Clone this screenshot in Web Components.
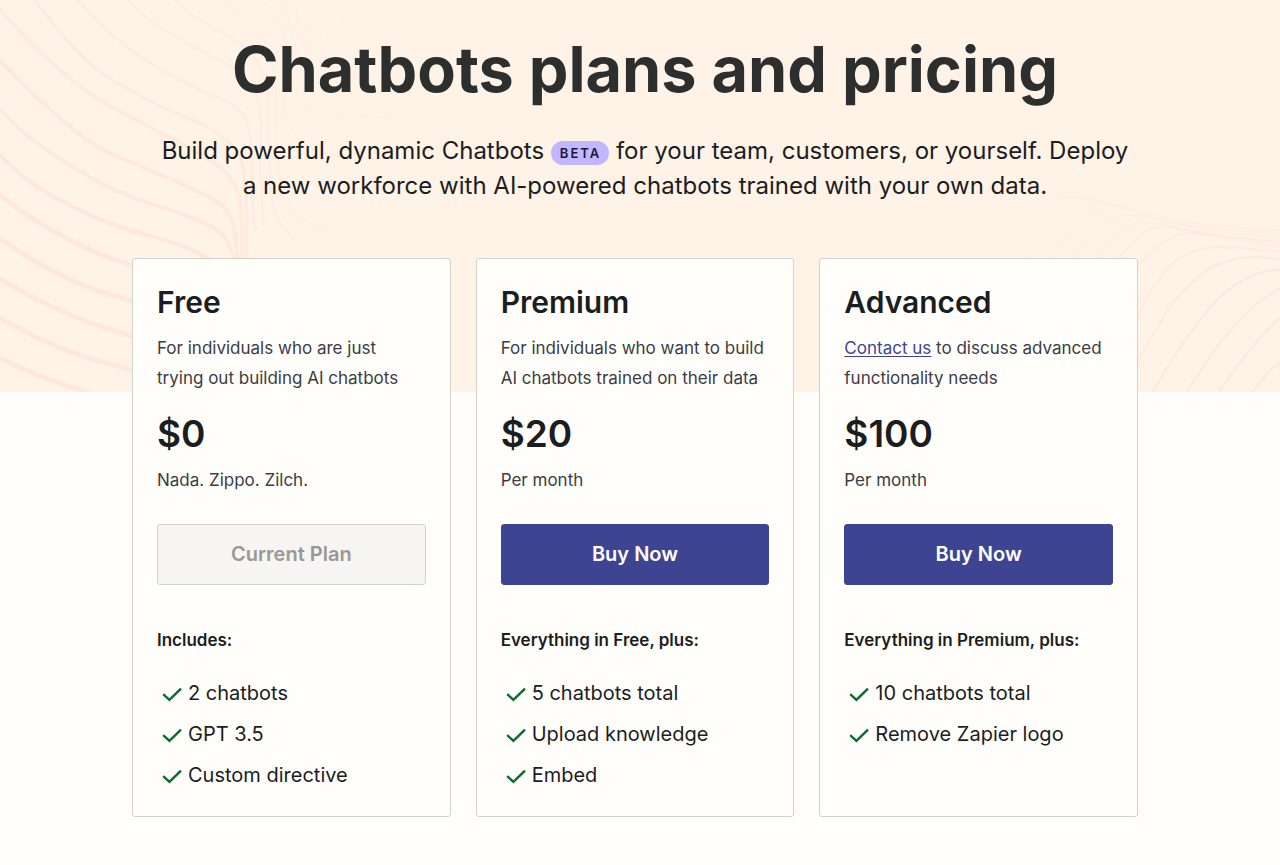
<!DOCTYPE html>
<html lang="en">
<head>
<meta charset="utf-8">
<meta name="viewport" content="width=device-width, initial-scale=1">
<title>Chatbots plans and pricing</title>
<style>
  body { margin: 0; background: #fffefb; color: #1b1d1e; font-family: Inter, "Liberation Sans", sans-serif; }
  plan-card a { color: #3d4592; text-underline-offset: 2px; }
</style>
</head>
<body>
<pricing-page>
  <pricing-header slot="header">
    <span slot="title">Chatbots plans and pricing</span>
    Build powerful, dynamic Chatbots <beta-badge>BETA</beta-badge> for your team, customers, or yourself. Deploy a new workforce with AI-powered chatbots trained with your own data.
  </pricing-header>
  <plan-card action="Current Plan" current>
    <span slot="name">Free</span>
    <span slot="description">For individuals who are just trying out building AI chatbots</span>
    <span slot="price">$0</span>
    <span slot="period">Nada. Zippo. Zilch.</span>
    <span slot="includes">Includes:</span>
    <plan-feature>2 chatbots</plan-feature>
    <plan-feature>GPT 3.5</plan-feature>
    <plan-feature>Custom directive</plan-feature>
  </plan-card>
  <plan-card action="Buy Now">
    <span slot="name">Premium</span>
    <span slot="description">For individuals who want to build AI chatbots trained on their data</span>
    <span slot="price">$20</span>
    <span slot="period">Per month</span>
    <span slot="includes">Everything in Free, plus:</span>
    <plan-feature>5 chatbots total</plan-feature>
    <plan-feature>Upload knowledge</plan-feature>
    <plan-feature>Embed</plan-feature>
  </plan-card>
  <plan-card action="Buy Now">
    <span slot="name">Advanced</span>
    <span slot="description"><a href="#contact">Contact us</a> to discuss advanced functionality needs</span>
    <span slot="price">$100</span>
    <span slot="period">Per month</span>
    <span slot="includes">Everything in Premium, plus:</span>
    <plan-feature>10 chatbots total</plan-feature>
    <plan-feature>Remove Zapier logo</plan-feature>
  </plan-card>
</pricing-page>

<script>
function define(name, html, setup) {
  const template = document.createElement('template');
  template.innerHTML = html;
  customElements.define(name, class extends HTMLElement {
    constructor() {
      super();
      this.attachShadow({ mode: 'open' }).append(template.content.cloneNode(true));
    }
    connectedCallback() { if (setup) setup(this, this.shadowRoot); }
  });
}

// Contour lines: [stroke width, opacity, points...]; each is smoothed into a curve.
const leftLines = [
  [5, .9, [-10,352],[0,358],[40,376],[85,392],[110,402]],
  [5, .9, [-10,312],[0,318],[40,339],[85,357],[132,370],[170,380]],
  [5, .9, [-10,273],[0,279],[40,301],[85,321],[132,336],[170,348]],
  [5, .9, [-10,233],[0,239],[40,264],[85,286],[132,301],[170,312]],
  [5, .9, [-10,186],[0,195],[30,217],[70,240],[110,258],[150,270]],
  [4, .9, [-10,146],[0,155],[30,182],[75,208],[120,227],[180,245],[215,262]],
  [4, .8, [-10,100],[0,109],[33,140],[95,180],[140,200],[190,217],[222,234],[236,262]],
  [4, .8, [-10,48],[0,60],[45,105],[95,145],[145,168],[205,195],[231,218],[238,262]],
  [4, .7, [-10,-6],[0,9],[40,52],[95,97],[150,127],[205,157],[232,180],[241,210],[242,262]],
  [3, .7, [28,-8],[60,32],[95,68],[150,101],[205,126],[234,148],[245,180],[247,262]],
  [3, .6, [70,-8],[110,33],[150,63],[205,92],[237,108],[250,135],[252,200],[255,230]],
  [2, .6, [119,-8],[155,24],[200,50],[236,70],[256,94],[261,125],[260,170],[264,226]],
  [2, .6, [165,-8],[200,20],[238,42],[259,65],[268,95],[269,150],[274,210],[294,240]],
  [1, .6, [208,-8],[240,14],[263,38],[275,80],[277,140],[281,190],[298,216],[330,232]],
  [1, .6, [252,-8],[272,12],[285,40],[284,90],[287,120],[308,146],[350,160]],
  [1, .5, [276,-8],[288,18],[296,50],[294,85],[304,104],[340,114],[400,119]],
  [1, .5, [295,-8],[298,20],[306,60],[303,95]],
  [1, .4, [309,-8],[307,30],[312,60]],
  [1, .4, [322,-8],[319,15],[322,42]],
  [1, .4, [336,-8],[331,15],[330,34]],
  [1, .3, [351,-8],[345,15],[340,30]]
];
// The right group counts x from the left edge of a 260-wide drawing.
const rightLines = [
  [2, .9, [227,398],[233,391],[247,374],[262,360]],
  [2, .9, [195,398],[200,391],[227,353],[262,315]],
  [2, .9, [163,398],[167,391],[200,343],[233,307],[262,287]],
  [2, .9, [129,398],[133,391],[163,343],[200,297],[233,275],[262,269]],
  [2, .8, [112,370],[120,357],[153,303],[187,270],[215,259],[240,257],[262,260]],
  [2, .7, [114,325],[120,313],[133,287],[157,260],[187,248],[220,248],[262,252]],
  [2, .6, [118,264],[147,240],[170,233],[207,238],[262,248]],
  [2, .5, [99,258],[123,233],[143,227],[180,232],[262,244]],
  [1, .7, [76,258],[98,234],[118,223],[150,226],[190,236],[262,241]],
  [1, .6, [54,258],[76,232],[98,217],[130,217],[190,231],[262,237]],
  [1, .5, [32,258],[54,226],[78,211],[107,210],[160,225],[262,234]],
  [1, .4, [8,258],[32,220],[55,204],[85,204],[130,214],[180,227],[262,232]],
  [1, .7, [35,198],[63,198],[107,208],[160,221],[215,227],[262,230]],
  [1, .2, [150,200],[200,170],[262,145]],
  [1, .2, [170,218],[210,205],[262,182]]
];
function drawLines(svg, lines) {
  for (const [width, opacity, ...p] of lines) {
    let d = `M${p[0]}`;
    for (let i = 0; i < p.length - 1; i++) {
      const a = p[i - 1] || p[i], b = p[i], c = p[i + 1], e = p[i + 2] || c;
      d += `C${b[0] + (c[0] - a[0]) / 6},${b[1] + (c[1] - a[1]) / 6} ${c[0] - (e[0] - b[0]) / 6},${c[1] - (e[1] - b[1]) / 6} ${c}`;
    }
    const path = document.createElementNS('http://www.w3.org/2000/svg', 'path');
    path.setAttribute('d', d);
    path.setAttribute('stroke-width', width);
    path.setAttribute('opacity', opacity);
    svg.append(path);
  }
}

define('contour-backdrop', `
  <style>
    :host { display: flex; justify-content: space-between; height: 392px; overflow: hidden; background: #fff3e8; }
    svg { flex: none; height: 392px; fill: none; stroke: #ffe6d9; }
  </style>
  <svg class="left" width="420" viewBox="0 0 420 392" aria-hidden="true"></svg>
  <svg class="right" width="260" viewBox="0 0 260 392" aria-hidden="true"></svg>
`, (el, root) => {
  const left = root.querySelector('.left');
  if (left.childElementCount) return;
  drawLines(left, leftLines);
  drawLines(root.querySelector('.right'), rightLines);
});

define('pricing-page', `
  <style>
    :host { display: block; position: relative; }
    contour-backdrop { position: absolute; inset: 0 0 auto; }
    main { position: relative; padding: 35px 0 48px; }
    .header { padding: 0 16px 0 26px; }
    .plans { padding: 55px 26px 0 16px; }
    .grid { display: grid; grid-template-columns: repeat(auto-fit, minmax(280px, 1fr)); gap: 25px; max-width: 1006px; margin: 0 auto; }
  </style>
  <contour-backdrop></contour-backdrop>
  <main>
    <div class="header"><slot name="header"></slot></div>
    <div class="plans"><div class="grid"><slot></slot></div></div>
  </main>
`);

define('pricing-header', `
  <style>
    :host { display: block; text-align: center; }
    h1 { margin: 0; font-size: 63px; line-height: 68px; font-weight: 700; color: #2d2e2e; }
    p { max-width: 980px; margin: 30px auto 0; font-size: 24px; line-height: 35px; }
  </style>
  <h1><slot name="title"></slot></h1>
  <p><slot></slot></p>
`);

define('beta-badge', `
  <style>
    :host { display: inline-block; padding: 0 8px 0 9px; border-radius: 12px; background: #c1b7ff; color: #1f1440;
      font-size: 13px; line-height: 24px; font-weight: 600; letter-spacing: 2px; vertical-align: 1px; }
  </style>
  <slot></slot>
`);

define('plan-card', `
  <style>
    :host { display: block; box-sizing: border-box; padding: 24px 24px 20px; border: 1px solid #d3d1cd; border-radius: 3px; background: #fffefb; }
    h2 { margin: 0; font-size: 30px; line-height: 38px; font-weight: 600; }
    p { margin: 0; }
    .small { font-size: 17px; line-height: 30px; font-weight: 400; color: #3c3c44; }
    .description { margin-top: 12px; }
    .price { margin-top: 16px; font-size: 37px; line-height: 50px; font-weight: 600; }
    .period { margin-top: 6px; }
    button { display: block; width: 100%; height: 61px; margin-top: 29px; padding: 0 0 2px; border: 1px solid #3d4592; border-radius: 3px;
      background: #3d4592; color: #fffdf9; font: 600 20px/24px Inter, "Liberation Sans", sans-serif; cursor: pointer; }
    button:disabled { border-color: #d3d1cd; background: #f6f5f3; color: #9b9894; cursor: default; }
    h3 { margin: 43px 0 0; font-size: 17px; line-height: 24px; font-weight: 600; }
    .features { margin-top: 21px; }
    ::slotted(span) { display: block; }
  </style>
  <h2><slot name="name"></slot></h2>
  <p class="small description"><slot name="description"></slot></p>
  <p class="price"><slot name="price"></slot></p>
  <p class="small period"><slot name="period"></slot></p>
  <button type="button"></button>
  <h3><slot name="includes"></slot></h3>
  <div class="features" role="list"><slot></slot></div>
`, (el, root) => {
  const button = root.querySelector('button');
  button.textContent = el.getAttribute('action');
  button.disabled = el.hasAttribute('current');
});

define('plan-feature', `
  <style>
    :host { display: flex; align-items: center; font-size: 20px; line-height: 41px; }
    svg { flex: none; width: 31px; height: 24px; fill: none; stroke: #0a6b2f; stroke-width: 2.4; }
  </style>
  <svg viewBox="0 0 31 24" aria-hidden="true"><path d="M6.2 12.2 L12.4 17.8 L24 6.6"/></svg>
  <slot></slot>
`, el => el.setAttribute('role', 'listitem'));
</script>
</body>
</html>
